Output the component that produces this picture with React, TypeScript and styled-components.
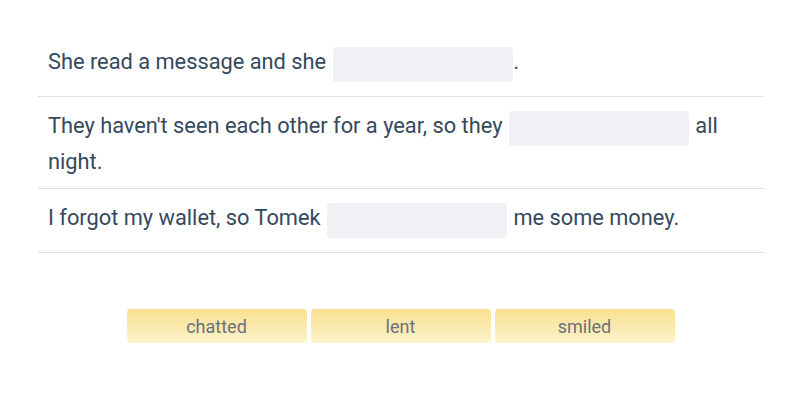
import React from "react";
import styled, { createGlobalStyle } from "styled-components";

const Global = createGlobalStyle`
  html, body { margin: 0; padding: 0; background: #ffffff; }
  body { font-family: Roboto, "Noto Sans", sans-serif; }
`;

const Page = styled.div`
  width: 800px;
  padding: 33px 37px 0 38px;
  box-sizing: border-box;
`;

const List = styled.div`
  display: flex;
  flex-direction: column;
`;

const Row = styled.div`
  padding: 14px 10px 12px;
  border-bottom: 1px solid #dfe0e2;
  font-size: 21.8px;
  line-height: 28px;
  color: #34495e;
`;

const Blank = styled.span`
  display: inline-block;
  width: 180px;
  height: 35px;
  margin: 0 1px 2px;
  border-radius: 4px;
  background: #f0f1f5;
  vertical-align: -15.5px;
`;

const Bank = styled.div`
  display: flex;
  justify-content: center;
  gap: 4px;
  margin-top: 56px;
`;

const Chip = styled.div`
  width: 180px;
  height: 34px;
  border-radius: 4px;
  background: linear-gradient(to bottom, #f8e08e, #fdf3cd);
  color: #6b7079;
  font-size: 18px;
  display: flex;
  align-items: center;
  justify-content: center;
`;

const sentences: [string, string][] = [
  ["She read a message and she ", "."],
  ["They haven't seen each other for a year, so they ", " all night."],
  ["I forgot my wallet, so Tomek ", " me some money."],
];

const words = ["chatted", "lent", "smiled"];

export default function App() {
  return (
    <>
      <Global />
      <Page>
        <List>
          {sentences.map(([a, b], i) => (
            <Row key={i}>
              {a}
              <Blank />
              {b}
            </Row>
          ))}
        </List>
        <Bank>
          {words.map((w) => (
            <Chip key={w}>{w}</Chip>
          ))}
        </Bank>
      </Page>
    </>
  );
}
